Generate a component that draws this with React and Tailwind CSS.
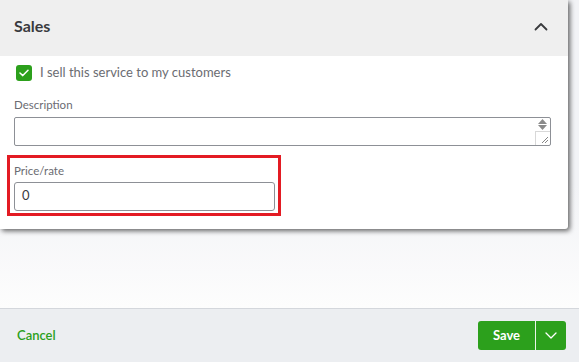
import React from "react";

export default function App() {
  const font = { fontFamily: "Lato, 'Open Sans', Arial, sans-serif" };
  return (
    <div className="w-[579px] h-[362px] flex flex-col overflow-hidden bg-[#f3f4f7]" style={font}>
      <div className="flex-1 flex flex-col bg-gradient-to-b from-[#f2f3f6] from-60% to-[#fdfdfd]">
        <div className="w-[568px] h-[229px] bg-white shadow-[2px_2px_5px_rgba(0,0,0,0.6)] rounded-br-[3px] flex flex-col">
          <div className="h-[56px] bg-[#efefef] flex items-center justify-between pl-[14px] pr-[20px] pb-[4px]">
            <span className="text-[16px] font-bold text-[#393a3d] leading-none">Sales</span>
            <svg width="14" height="9" viewBox="0 0 14 9" fill="none">
              <path d="M1.5 7.5 L7 2 L12.5 7.5" stroke="#393a3d" strokeWidth="1.8" strokeLinecap="round" strokeLinejoin="round" />
            </svg>
          </div>
          <div className="pl-[16px] pt-[7px] flex items-center gap-[8px]">
            <div className="w-[16px] h-[16px] rounded-[3px] bg-[#2ca01c] flex items-center justify-center">
              <svg width="10" height="8" viewBox="0 0 10 8" fill="none">
                <path d="M1 4 L3.8 6.6 L9 1.2" stroke="white" strokeWidth="1.5" strokeLinecap="round" strokeLinejoin="round" />
              </svg>
            </div>
            <span className="text-[13px] text-[#6b6c72]">I sell this service to my customers</span>
          </div>
          <div className="pl-[14px] pt-[16px] text-[11.5px] text-[#6b6c72] leading-none">Description</div>
          <div className="ml-[14px] mt-[7px] w-[537px] h-[29px] border border-[#8d9096] rounded-[2px] flex justify-end">
            <div className="w-[15px] flex flex-col">
              <div className="h-[13px] flex flex-col items-center justify-center gap-[1px]">
                <svg width="9" height="5" viewBox="0 0 9 5"><path d="M0 5 L4.5 0 L9 5 Z" fill="#8a8a8a" /></svg>
                <svg width="9" height="5" viewBox="0 0 9 5"><path d="M0 0 L4.5 5 L9 0 Z" fill="#8a8a8a" /></svg>
              </div>
              <div className="flex-1 border-l border-t border-[#d8d8d8] flex items-end justify-end pr-[1px] pb-[1px]">
                <svg width="8" height="8" viewBox="0 0 8 8">
                  <path d="M1 7 L7 1 M4 7 L7 4" stroke="#777" strokeWidth="0.9" />
                </svg>
              </div>
            </div>
          </div>
          <div className="ml-[7px] mt-[9px] w-[274px] h-[61px] border-[3px] border-[#e31b23] pl-[4px] pt-[7px]">
            <div className="text-[11.5px] text-[#6b6c72] leading-none">Price/rate</div>
            <div className="mt-[5px] w-[261px] h-[29px] border border-[#8d9096] rounded-[3px] flex items-center pl-[7px] text-[13px] text-[#393a3d]">0</div>
          </div>
        </div>
      </div>
      <div className="h-[54px] border-t border-[#d4d7dc] bg-[#eceef1] flex items-center justify-between pl-[17px] pr-[13px]">
        <span className="text-[13px] font-semibold text-[#2ca01c]">Cancel</span>
        <div className="flex h-[29px] rounded-[3px] overflow-hidden bg-[#2ca01c]">
          <div className="w-[57px] flex items-center justify-center text-white text-[13px] font-bold">Save</div>
          <div className="w-px bg-[#eaf5e8]" />
          <div className="w-[30px] flex items-center justify-center">
            <svg width="12" height="7" viewBox="0 0 12 7" fill="none">
              <path d="M1 1 L6 6 L11 1" stroke="white" strokeWidth="1.3" strokeLinecap="round" strokeLinejoin="round" />
            </svg>
          </div>
        </div>
      </div>
    </div>
  );
}
